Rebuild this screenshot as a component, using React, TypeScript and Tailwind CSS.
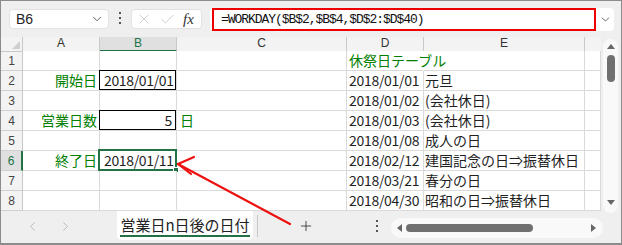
import React from "react";
import { ChevronDown, X, Check, ChevronLeft, ChevronRight, Plus } from "lucide-react";

type Row = {
  a?: string;
  b?: string;
  c?: string;
  d?: string;
  e?: string;
  dGreen?: boolean;
  bRight?: boolean;
  bBox?: "black" | "selected";
};

const rows: Row[] = [
  { d: "休祭日テーブル", dGreen: true },
  { a: "開始日", b: "2018/01/01", bBox: "black", d: "2018/01/01", e: "元旦" },
  { d: "2018/01/02", e: "(会社休日)" },
  { a: "営業日数", b: "5", bRight: true, bBox: "black", c: "日", d: "2018/01/03", e: "(会社休日)" },
  { d: "2018/01/08", e: "成人の日" },
  { a: "終了日", b: "2018/01/11", bBox: "selected", d: "2018/02/12", e: "建国記念の日⇒振替休日" },
  { d: "2018/03/21", e: "春分の日" },
  { d: "2018/04/30", e: "昭和の日⇒振替休日" },
];

const cols = "grid grid-cols-[22px_77px_77px_170px_77px_161px_16px]";
const cell = "h-[20px] border-r border-b border-[#dadada] bg-white text-[14px] leading-[19px] whitespace-nowrap overflow-visible";
const green = "text-[#008000]";

export default function App() {
  return (
    <div className="w-[622px] h-[245px] overflow-hidden bg-[#efefef] border-t border-x border-b-2 border-[#8c8c8c] relative font-['Noto_Sans_CJK_JP',sans-serif] text-[#1f1f1f]">
      {/* formula bar */}
      <div className="h-[36px] flex items-start pl-[8px]">
        <div className="mt-[8px] w-[100px] h-[20px] bg-white rounded-[4px] border border-[#e2e2e2] flex items-center justify-between pl-[6px] pr-[4px]">
          <span className="font-['Liberation_Sans',sans-serif] text-[14px] text-[#222]">B6</span>
          <ChevronDown size={14} strokeWidth={1.6} className="text-[#555]" />
        </div>
        <div className="w-[22px] h-[36px] flex flex-col items-center justify-center gap-[3px] -mt-[1px]">
          <div className="w-[2px] h-[2px] bg-[#555]" />
          <div className="w-[2px] h-[2px] bg-[#555]" />
          <div className="w-[2px] h-[2px] bg-[#555]" />
        </div>
        <div className="mt-[8px] w-[71px] h-[20px] bg-white rounded-[4px] border border-[#e2e2e2] flex items-center pl-[4px] gap-[7px]">
          <X size={16} strokeWidth={1.1} className="text-[#bdbdbd]" />
          <Check size={17} strokeWidth={1.1} className="text-[#bdbdbd]" />
          <span className="font-['Liberation_Serif',serif] italic text-[15px] text-[#333] leading-none">fx</span>
        </div>
        <div className="ml-[8px] mt-[7px] w-[404px] h-[23px] bg-white rounded-[4px] flex items-stretch">
          <div className="ml-[2px] w-[384px] h-[23px] border-2 border-[#ee0000] flex items-center pl-[7px]">
            <span className="font-['Liberation_Mono',monospace] text-[13px] tracking-[-1.05px] text-[#111]">
              =WORKDAY($B$2,$B$4,$D$2:$D$40)
            </span>
          </div>
          <div className="flex-1 flex items-center justify-center">
            <ChevronDown size={13} strokeWidth={1.6} className="text-[#555]" />
          </div>
        </div>
      </div>

      {/* sheet */}
      <div className="flex">
        <div className="w-[600px]">
          <div className={`${cols} h-[14px] bg-[#f3f3f3] text-[12px] leading-[13px] text-[#333] font-['Liberation_Sans',sans-serif]`}>
            <div className="border-r border-b border-[#c8c8c8] relative">
              <div className="absolute right-[2px] bottom-[2px] w-0 h-0 border-l-[8px] border-l-transparent border-b-[8px] border-b-[#cfcfcf]" />
            </div>
            <div className="border-r border-b border-[#c8c8c8] text-center">A</div>
            <div className="border-r border-b-2 border-r-[#c8c8c8] border-b-[#217346] bg-[#e0e0e0] text-center text-[#217346]">B</div>
            <div className="border-r border-b border-[#c8c8c8] text-center">C</div>
            <div className="border-r border-b border-[#c8c8c8] text-center">D</div>
            <div className="border-r border-b border-[#c8c8c8] text-center">E</div>
            <div className="border-b border-[#c8c8c8]" />
          </div>
          {rows.map((r, i) => {
            const sel = i === 5;
            return (
              <div key={i} className={cols}>
                <div
                  className={`h-[20px] border-b border-[#d0d0d0] text-center text-[12px] leading-[20px] font-['Liberation_Sans',sans-serif] ${
                    sel
                      ? "bg-[#e0e0e0] border-r-2 border-r-[#217346] text-[#217346]"
                      : "bg-[#f3f3f3] border-r border-r-[#c8c8c8] text-[#444]"
                  }`}
                >
                  {i + 1}
                </div>
                <div className={`${cell} ${green} text-right pr-[2px]`}>{r.a}</div>
                <div className={`${cell} relative tracking-[-0.35px] ${r.bRight ? "text-right pr-[4px]" : "pl-[4px]"}`}>
                  {r.bBox === "black" && (
                    <div className="absolute -left-[1px] -top-[1px] right-0 bottom-0 border border-black" />
                  )}
                  {r.bBox === "selected" && (
                    <>
                      <div className="absolute -left-[2px] -top-[2px] -right-[1px] -bottom-[1px] border-2 border-[#217346]" />
                      <div className="absolute -right-[3px] -bottom-[3px] w-[6px] h-[6px] bg-[#217346] border border-white" />
                    </>
                  )}
                  <span className="relative">{r.b}</span>
                </div>
                <div className={`${cell} ${green} pl-[3px]`}>{r.c}</div>
                <div
                  className={`${cell} relative z-[1] pl-[2px] ${
                    r.dGreen ? `${green} border-r-white` : "tracking-[-0.3px]"
                  }`}
                >
                  {r.d}
                </div>
                <div className={`${cell} pl-[1px]`}>{r.e}</div>
                <div className={cell} />
              </div>
            );
          })}
        </div>

        {/* vertical scrollbar */}
        <div className="w-[20px] h-[174px] pl-[2px] pt-[2px]">
          <div className="w-[15px] h-[174px] rounded-full bg-[#f9f9f9] flex flex-col items-center pt-[5px]">
            <div className="w-0 h-0 border-x-[4px] border-x-transparent border-b-[5px] border-b-[#666]" />
            <div className="mt-[6px] w-[8px] h-[27px] rounded-full bg-[#707070]" />
            <div className="flex-1" />
            <div className="mb-[8px] w-0 h-0 border-x-[4px] border-x-transparent border-t-[5px] border-t-[#666]" />
          </div>
        </div>
      </div>

      {/* sheet tabs */}
      <div className="h-[32px] flex items-start">
        <div className="w-[116px] h-[30px] flex items-center pl-[24px] gap-[18px] text-[#b0b0b0]">
          <ChevronLeft size={15} strokeWidth={1.4} />
          <ChevronRight size={15} strokeWidth={1.4} />
        </div>
        <div className="w-[136px] h-[29px] bg-white rounded-b-[5px] flex items-center justify-center">
          <span className="text-[15px] leading-[20px] text-[#222] border-b-2 border-[#217346]">営業日n日後の日付</span>
        </div>
        <div className="ml-[4px] mt-[4px] w-px h-[22px] bg-[#c8c8c8]" />
        <div className="ml-[40px] h-[30px] flex items-center text-[#333]">
          <Plus size={16} strokeWidth={1.3} />
        </div>
        <div className="ml-[62px] h-[30px] flex flex-col items-center justify-center gap-[3px]">
          <div className="w-[2px] h-[2px] bg-[#555]" />
          <div className="w-[2px] h-[2px] bg-[#555]" />
          <div className="w-[2px] h-[2px] bg-[#555]" />
        </div>
        <div className="ml-[13px] mt-[7px] w-[212px] h-[20px] rounded-full bg-[#f9f9f9] flex items-center pl-[6px] pr-[7px]">
          <div className="w-0 h-0 border-y-[4px] border-y-transparent border-r-[5px] border-r-[#666]" />
          <div className="ml-[4px] w-[127px] h-[8px] rounded-full bg-[#707070]" />
          <div className="flex-1" />
          <div className="w-0 h-0 border-y-[4px] border-y-transparent border-l-[5px] border-l-[#666]" />
        </div>
      </div>

      {/* red annotation arrow */}
      <svg className="absolute left-0 top-0 pointer-events-none" width="622" height="245">
        <g stroke="#ee1111" strokeWidth="2.2" strokeLinecap="round" fill="none">
          <line x1="289" y1="223" x2="177" y2="163" />
          <line x1="177" y1="163" x2="193" y2="156" />
          <line x1="177" y1="163" x2="190" y2="173" />
        </g>
      </svg>
    </div>
  );
}
